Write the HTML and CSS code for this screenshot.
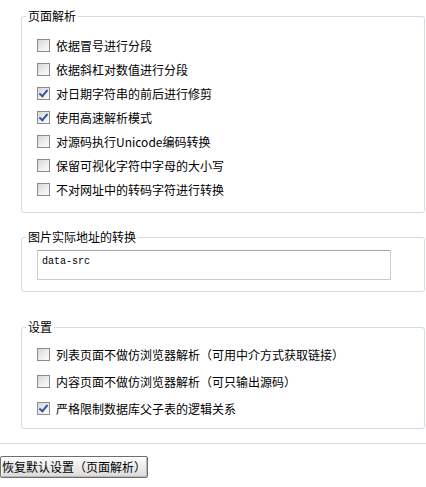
FILE: index.html
```html
<!DOCTYPE html>
<html>
<head>
  <meta charset="utf-8">
  <link rel="stylesheet" href="styles.css">
</head>
<body>
  <fieldset class="group group_first">
    <legend>页面解析</legend>
    <div class="rows">
      <label class="opt"><input type="checkbox">依据冒号进行分段</label>
      <label class="opt"><input type="checkbox">依据斜杠对数值进行分段</label>
      <label class="opt"><input type="checkbox" checked>对日期字符串的前后进行修剪</label>
      <label class="opt"><input type="checkbox" checked>使用高速解析模式</label>
      <label class="opt"><input type="checkbox">对源码执行Unicode编码转换</label>
      <label class="opt"><input type="checkbox">保留可视化字符中字母的大小写</label>
      <label class="opt"><input type="checkbox">不对网址中的转码字符进行转换</label>
    </div>
  </fieldset>

  <fieldset class="group group_img">
    <legend>图片实际地址的转换</legend>
    <div class="area_wrap">
      <textarea class="src_box">data-src</textarea>
    </div>
  </fieldset>

  <fieldset class="group group_set">
    <legend>设置</legend>
    <div class="rows rows_wide">
      <label class="opt"><input type="checkbox">列表页面不做仿浏览器解析（可用中介方式获取链接）</label>
      <label class="opt"><input type="checkbox">内容页面不做仿浏览器解析（可只输出源码）</label>
      <label class="opt"><input type="checkbox" checked>严格限制数据库父子表的逻辑关系</label>
    </div>
  </fieldset>

  <hr class="sep">
  <button class="reset_btn">恢复默认设置（页面解析）</button>
</body>
</html>
```

FILE: styles.css
```css
body {
  margin: 0;
  background: #fff;
  color: #000;
  font-family: "Noto Sans CJK SC", "DejaVu Sans", sans-serif;
  font-size: 12px;
}

.group {
  margin: 9px 1px 0 21px;
  padding: 0;
  border: 1px solid #d3dce3;
  border-radius: 3px;
  min-width: 0;
}
.group_img { margin-top: 17px; }
.group_set { margin-top: 28px; }

.group legend {
  margin-left: 4px;
  padding: 0 2px;
  line-height: 14px;
}

.rows {
  display: flex;
  flex-direction: column;
  padding: 10px 0 11px 15px;
}
.rows_wide { padding: 7px 0 6px 15px; }

.opt {
  display: flex;
  align-items: center;
  height: 24px;
  white-space: nowrap;
}
.rows_wide .opt { height: 27px; }

.opt input {
  -webkit-appearance: none;
  appearance: none;
  position: relative;
  width: 13px;
  height: 13px;
  margin: 0 6px 0 0;
  border: 1px solid #8d8d8d;
  background: linear-gradient(135deg, #d6d6d2 0%, #ececea 50%, #fbfbfb 100%);
}
.opt input:checked::after {
  content: "";
  position: absolute;
  left: 3px;
  top: 0px;
  width: 3px;
  height: 7px;
  border-right: 2px solid #3556a8;
  border-bottom: 2px solid #3556a8;
  transform: rotate(40deg);
}

.area_wrap { padding: 6px 0 11px 15px; }

.src_box {
  display: block;
  box-sizing: border-box;
  width: 354px;
  height: 30px;
  margin: 0;
  padding: 5px 4px 3px;
  border: 1px solid #c9ced3;
  border-top-color: #a7a7a7;
  border-radius: 1px;
  resize: none;
  overflow: hidden;
  font-family: "Liberation Mono", monospace;
  font-size: 10px;
  line-height: 12px;
  color: #000;
}

.sep {
  margin: 14px 0 0 0;
  border: 0;
  border-top: 1px solid #d6dee4;
  height: 0;
}

.reset_btn {
  display: block;
  margin: 12px 0 0 0;
  width: 148px;
  height: 22px;
  padding: 0;
  border: 1px solid #6e6e6e;
  border-radius: 2px;
  background: linear-gradient(#fbfbfb, #e9e9e9 60%, #d9d9d9);
  box-shadow: inset -1px -1px 0 #b8b8b8, inset 1px 1px 0 #fff;
  font-family: "Noto Sans CJK SC", sans-serif;
  font-size: 12px;
  line-height: 18px;
  color: #000;
}
```
